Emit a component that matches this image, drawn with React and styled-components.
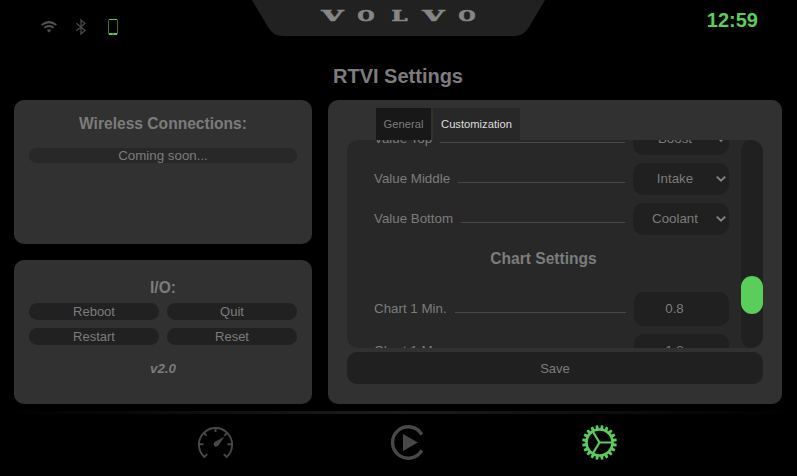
import React from "react";
import styled, { createGlobalStyle } from "styled-components";

const GlobalStyle = createGlobalStyle`
  *, *::before, *::after { box-sizing: border-box; }
  html, body { margin: 0; background: #000; overflow: hidden; }
  body { font-family: "Liberation Sans", Arial, sans-serif; font-size: 13.333px; color: #7c7c7c; }
  button { font: inherit; color: inherit; border: 0; padding: 0; margin: 0; }
  svg { display: block; }
`;

const Screen = styled.div`
  width: 797px;
  height: 476px;
  display: flex;
  flex-direction: column;
  background: #000;
`;

const Header = styled.header`
  height: 52px;
  display: grid;
  grid-template-columns: 252px 293px 252px;
`;

const StatusIcons = styled.div`
  display: flex;
  align-items: center;
  gap: 16px;
  height: 16px;
  margin: 19px 0 0 41px;
`;

const Clock = styled.div`
  margin: 9px 39px 0 0;
  text-align: right;
  font-size: 20px;
  line-height: 23px;
  font-weight: 700;
  color: #5bcd5b;
`;

const PageTitle = styled.h1`
  margin: 13px 0 12px;
  padding-right: 1px;
  font-size: 20px;
  line-height: 23px;
  text-align: center;
`;

const Content = styled.main`
  display: grid;
  grid-template-columns: 298px 454px;
  gap: 16px;
  height: 304px;
  padding-left: 14px;
`;

const Column = styled.div`
  display: grid;
  grid-template-rows: 144px 144px;
  gap: 16px;
`;

const Card = styled.section`
  display: flex;
  flex-direction: column;
  padding: ${(p) => p.$padding};
  border-radius: 10px;
  background: #313131;
`;

const Heading = styled.h3`
  margin: 0;
  font-size: 15.6px;
  line-height: 18px;
  text-align: center;
`;

const Notice = styled.div`
  height: 15px;
  margin-top: 15px;
  border-radius: 8px;
  background: #282828;
  text-align: center;
  line-height: 15px;
`;

const ButtonGrid = styled.div`
  display: grid;
  grid-template-columns: 130px 130px;
  grid-auto-rows: 17px;
  gap: 8px;
  margin-top: 6px;
`;

const PillButton = styled.button`
  border-radius: 9px;
  background: #212121;
  font-size: 13px;
  line-height: 17px;
`;

const Version = styled.div`
  margin-top: 16px;
  text-align: center;
  font-style: italic;
  font-weight: 700;
  line-height: 15px;
`;

const Tabs = styled.div`
  display: flex;
  gap: 2px;
  height: 32px;
  margin-left: 29px;
`;

const Tab = styled.button`
  width: ${(p) => p.$width};
  font-size: 11.2px;
  background: ${(p) => (p.$active ? "#282828" : "#181818")};
  color: ${(p) => (p.$active ? "#dedede" : "#7c7c7c")};
`;

const ScrollPanel = styled.div`
  display: flex;
  justify-content: space-between;
  height: 208px;
  padding-left: 27px;
  overflow: hidden;
  border-radius: 12px;
  background: #282828;
`;

const SettingsList = styled.div`
  width: 355px;
  margin-top: -17px;
`;

const SettingRow = styled.div`
  display: flex;
  align-items: center;
  gap: 8px;
  height: ${(p) => p.$height};
  margin-bottom: 8px;
`;

const Label = styled.span`
  line-height: 15px;
  padding-bottom: 1px;
`;

const Leader = styled.span`
  flex: 1;
  height: 1px;
  margin-top: 7px;
  background: #484848;
`;

const Select = styled.div`
  display: flex;
  align-items: center;
  width: 96px;
  height: 32px;
  padding: 0 3px 1px 0;
  border-radius: 10px;
  background: #202020;
`;

const SelectValue = styled.span`
  flex: 1;
  padding-left: 1px;
  text-align: center;
`;

const NumberField = styled.div`
  width: 95px;
  height: 34px;
  padding-right: 14px;
  border-radius: 10px;
  background: #202020;
  line-height: 33px;
  text-align: center;
`;

const SectionTitle = styled(Heading)`
  height: 49px;
  padding-top: 7px;
  margin-right: 16px;
`;

const ScrollTrack = styled.div`
  width: 22px;
  height: 208px;
  padding-top: 136px;
  border-radius: 11px;
  background: #202020;
`;

const ScrollThumb = styled.div`
  height: 38px;
  border-radius: 11px;
  background: #5bcd5b;
`;

const SaveButton = styled.button`
  height: 32px;
  margin-top: 4px;
  border-radius: 10px;
  background: #202020;
  font-size: 13px;
`;

const Divider = styled.div`
  height: 3px;
  margin-top: 7px;
  background: linear-gradient(90deg, #000, #1c1c1c 50%, #000);
`;

const Nav = styled.nav`
  display: grid;
  grid-template-columns: 192px 192px 192px;
  justify-content: center;
  justify-items: center;
  padding-top: 9px;
  margin-left: 18px;
`;

const NavItem = styled.div`
  width: 40px;
  height: 40px;
  color: ${(p) => (p.$active ? "#5bcd5b" : "#484848")};
`;

const LOGO = [
  ["V", 69.5, 22],
  ["O", 105.5, 17],
  ["L", 139.5, 16],
  ["V", 170.5, 22],
  ["O", 206.5, 17],
];

function Brand() {
  return (
    <svg width="293" height="36" viewBox="0 0 293 36">
      <path d="M0 0H293L277 27Q272 36 262 36H31Q21 36 16 27Z" fill="#212121" />
      <g
        fill="#868686"
        stroke="#868686"
        strokeWidth=".7"
        fontFamily="DejaVu Serif, serif"
        fontWeight="700"
        fontSize="15.4"
      >
        {LOGO.map(([char, x, w]) => (
          <text key={x} x={x} y="21.1" textLength={w} lengthAdjust="spacingAndGlyphs">{char}</text>
        ))}
      </g>
    </svg>
  );
}

function Wifi() {
  return (
    <svg width="16" height="16" viewBox="0 0 16 16" fill="none" stroke="#505050" strokeWidth="2">
      <path d="M.7 6Q8 .2 15.3 6M3.3 8.8Q8 5.2 12.7 8.8" />
      <path d="M5.6 11.1Q8 9.5 10.4 11.1L8 13.6Z" fill="#505050" stroke="none" />
    </svg>
  );
}

function Bluetooth() {
  return (
    <svg width="16" height="16" viewBox="0 0 16 16" fill="none" stroke="#484848" strokeWidth="1.3">
      <path d="M3.3 4.2L12 11.4 8 15V1L12 4.6 3.3 11.8" />
    </svg>
  );
}

function Phone() {
  return (
    <svg width="16" height="16" viewBox="0 0 16 16">
      <rect x="3.5" y=".5" width="9" height="15" rx="1" fill="none" stroke="#347534" />
      <path d="M4 0H12V1H4ZM4 14H12V16H4Z" fill="#5bcd5b" />
      <path d="M7 14.4H9V15.6H7Z" fill="#3c873c" />
    </svg>
  );
}

function Chevron() {
  return (
    <svg width="10" height="8" viewBox="0 0 10 8" fill="none" stroke="#858585" strokeWidth="1.9">
      <path d="M.8 1.6L5 5.7 9.2 1.6" />
    </svg>
  );
}

function Gauge() {
  return (
    <svg width="40" height="40" viewBox="0 0 40 40" fill="none" stroke="currentColor" strokeWidth="1.9">
      <path d="M11.2 31.2L8.4 34A16.6 16.6 0 1 1 30.6 34L27.8 31.2M19.5 5V9M3.5 21.3H7.5M31.5 21.3H35.5M8 10L10.6 12.6M31 10L28.4 12.6" />
      <path d="M28.6 13.6L22.2 22.8Q19.8 24.5 18 22.7Q16.8 20.8 18.7 19.1Z" fill="currentColor" stroke="none" />
    </svg>
  );
}

function Play() {
  return (
    <svg width="40" height="40" viewBox="0 0 40 40">
      <path d="M33.8 11.6A15.7 15.7 0 1 0 33.8 27.4" fill="none" stroke="currentColor" strokeWidth="3.4" />
      <path d="M15 11L29.8 19.5 15 28Z" fill="currentColor" />
    </svg>
  );
}

const TEETH = Array.from({ length: 20 }, (_, i) => i * 18);

function Gear() {
  return (
    <svg width="40" height="40" viewBox="0 0 40 40" fill="none" stroke="currentColor">
      <circle cx="19.5" cy="19.5" r="13" strokeWidth="2.6" />
      {TEETH.map((angle) => (
        <path
          key={angle}
          d="M17.8 6.5L18.3 2.2H20.7L21.2 6.5Z"
          fill="currentColor"
          stroke="none"
          transform={`rotate(${angle + 9} 19.5 19.5)`}
        />
      ))}
      <path d="M33 19.5H19.5L12.7 8.2M19.5 19.5L12.7 30.8" strokeWidth="2.2" />
    </svg>
  );
}

const SELECTS = [
  ["Value Top", "Boost"],
  ["Value Middle", "Intake"],
  ["Value Bottom", "Coolant"],
];

const LIMITS = [
  ["Chart 1 Min.", "0.8"],
  ["Chart 1 Max.", "1.8"],
];

export default function App() {
  return (
    <>
      <GlobalStyle />
      <Screen>
        <Header>
          <StatusIcons>
            <Wifi />
            <Bluetooth />
            <Phone />
          </StatusIcons>
          <Brand />
          <Clock>12:59</Clock>
        </Header>
        <PageTitle>RTVI Settings</PageTitle>
        <Content>
          <Column>
            <Card $padding="15px 15px 0">
              <Heading>Wireless Connections:</Heading>
              <Notice>Coming soon...</Notice>
            </Card>
            <Card $padding="19px 15px 0">
              <Heading>I/O:</Heading>
              <ButtonGrid>
                <PillButton>Reboot</PillButton>
                <PillButton>Quit</PillButton>
                <PillButton>Restart</PillButton>
                <PillButton>Reset</PillButton>
              </ButtonGrid>
              <Version>v2.0</Version>
            </Card>
          </Column>
          <Card $padding="8px 19px 0">
            <Tabs>
              <Tab $width="55px">General</Tab>
              <Tab $width="87px" $active>Customization</Tab>
            </Tabs>
            <ScrollPanel>
              <SettingsList>
                {SELECTS.map(([label, value]) => (
                  <SettingRow key={label} $height="32px">
                    <Label>{label}</Label>
                    <Leader />
                    <Select>
                      <SelectValue>{value}</SelectValue>
                      <Chevron />
                    </Select>
                  </SettingRow>
                ))}
                <SectionTitle>Chart Settings</SectionTitle>
                {LIMITS.map(([label, value]) => (
                  <SettingRow key={label} $height="34px">
                    <Label>{label}</Label>
                    <Leader />
                    <NumberField>{value}</NumberField>
                  </SettingRow>
                ))}
              </SettingsList>
              <ScrollTrack>
                <ScrollThumb />
              </ScrollTrack>
            </ScrollPanel>
            <SaveButton>Save</SaveButton>
          </Card>
        </Content>
        <Divider />
        <Nav>
          <NavItem><Gauge /></NavItem>
          <NavItem><Play /></NavItem>
          <NavItem $active><Gear /></NavItem>
        </Nav>
      </Screen>
    </>
  );
}
